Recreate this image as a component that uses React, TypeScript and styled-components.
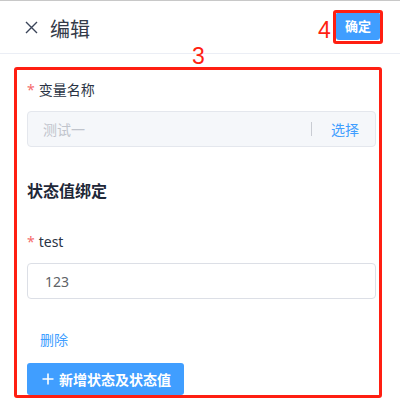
import React from "react";
import styled, { createGlobalStyle } from "styled-components";

const GlobalStyle = createGlobalStyle`
  html, body { margin: 0; padding: 0; background: #fff; }
  body { font-family: "Noto Sans", "Noto Sans CJK SC", sans-serif; }
  * { box-sizing: border-box; }
`;

const Page = styled.div`
  position: relative;
  width: 400px;
  height: 413px;
  border-top: 1px solid #c8c8c8;
  overflow: hidden;
`;

const Header = styled.div`
  height: 53px;
  display: flex;
  align-items: center;
  padding: 0 20px 0 24px;
  border-bottom: 1px solid #ebeef5;
`;

const CloseButton = styled.span`
  display: inline-flex;
  width: 14px;
  height: 14px;
  align-items: center;
  justify-content: center;
  color: #3a4459;
`;

const Title = styled.span`
  margin-left: 12px;
  font-size: 20px;
  line-height: 28px;
  color: #333a48;
  font-family: "Noto Sans CJK SC", sans-serif;
  margin-top: 3px;
`;

const Spacer = styled.div`
  flex: 1;
`;

const ConfirmButton = styled.button`
  width: 44px;
  height: 28px;
  border: none;
  border-radius: 3px;
  background: #409eff;
  color: #fff;
  font-size: 13px;
  font-weight: 600;
  font-family: "Noto Sans CJK SC", sans-serif;
  padding: 0;
  margin-bottom: 3px;
`;

const Body = styled.div`
  display: flex;
  flex-direction: column;
  padding: 25px 24px 0 27px;
`;

const Label = styled.div<{ $gap?: number }>`
  display: flex;
  align-items: center;
  height: 20px;
  font-size: 14px;
  color: #2b3445;
  margin-top: ${(p) => p.$gap ?? 0}px;
  font-family: "Noto Sans", "Noto Sans CJK SC", sans-serif;
`;

const Required = styled.span`
  color: #f56c6c;
  margin-right: 4px;
  font-size: 14px;
`;

const InputBox = styled.div<{ $disabled?: boolean }>`
  margin-top: 12px;
  height: 36px;
  display: flex;
  align-items: center;
  border: 1px solid ${(p) => (p.$disabled ? "#e4e7ed" : "#dcdfe6")};
  background: ${(p) => (p.$disabled ? "#f5f7fa" : "#fff")};
  border-radius: 4px;
  padding: 0 16px 0 15px;
  font-size: 14px;
`;

const InputText = styled.span<{ $muted?: boolean }>`
  flex: 1;
  color: ${(p) => (p.$muted ? "#c0c4cc" : "#606266")};
  font-family: "Noto Sans", "Noto Sans CJK SC", sans-serif;
  padding-left: ${(p) => (p.$muted ? 0 : 2)}px;
`;

const Divider = styled.span`
  width: 1px;
  height: 14px;
  background: #c9ccd3;
  margin-right: 19px;
`;

const LinkText = styled.span`
  color: #409eff;
  font-size: 14px;
  font-family: "Noto Sans CJK SC", sans-serif;
`;

const SectionTitle = styled.div`
  margin-top: 31px;
  height: 24px;
  line-height: 24px;
  font-size: 16px;
  font-weight: 700;
  color: #1f2838;
  font-family: "Noto Sans CJK SC", sans-serif;
`;

const DeleteLink = styled(LinkText)`
  margin-top: 30px;
  margin-left: 13px;
  height: 20px;
  line-height: 20px;
  align-self: flex-start;
`;

const AddButton = styled.button`
  margin-top: 14px;
  align-self: flex-start;
  width: 157px;
  height: 32px;
  border: none;
  border-radius: 3px;
  background: #409eff;
  color: #fff;
  display: flex;
  align-items: center;
  padding: 0 0 0 15px;
  font-size: 14px;
  font-weight: 700;
  font-family: "Noto Sans CJK SC", sans-serif;
  gap: 5px;
`;

const AnnotationBox = styled.div<{ $left: number; $top: number; $w: number; $h: number }>`
  position: absolute;
  left: ${(p) => p.$left}px;
  top: ${(p) => p.$top}px;
  width: ${(p) => p.$w}px;
  height: ${(p) => p.$h}px;
  border: 3px solid #ff1f12;
  border-radius: 3px;
  pointer-events: none;
`;

const AnnotationNumber = styled.span<{ $left: number; $top: number }>`
  position: absolute;
  left: ${(p) => p.$left}px;
  top: ${(p) => p.$top}px;
  color: #ff1f12;
  font-size: 23px;
  line-height: 24px;
  font-family: "Liberation Sans", Arial, sans-serif;
`;

export default function App() {
  return (
    <>
      <GlobalStyle />
      <Page>
        <Header>
          <CloseButton>
            <svg width="13" height="13" viewBox="0 0 13 13">
              <path d="M1 1 L12 12 M12 1 L1 12" stroke="currentColor" strokeWidth="1.4" fill="none" />
            </svg>
          </CloseButton>
          <Title>编辑</Title>
          <Spacer />
          <ConfirmButton>确定</ConfirmButton>
        </Header>
        <Body>
          <Label>
            <Required>*</Required>变量名称
          </Label>
          <InputBox $disabled>
            <InputText $muted>测试一</InputText>
            <Divider />
            <LinkText>选择</LinkText>
          </InputBox>
          <SectionTitle>状态值绑定</SectionTitle>
          <Label $gap={29}>
            <Required>*</Required>test
          </Label>
          <InputBox>
            <InputText>123</InputText>
          </InputBox>
          <DeleteLink>删除</DeleteLink>
          <AddButton>
            <svg width="12" height="12" viewBox="0 0 12 12">
              <path d="M6 0.5 V11.5 M0.5 6 H11.5" stroke="#fff" strokeWidth="1.6" />
            </svg>
            新增状态及状态值
          </AddButton>
        </Body>
        <AnnotationBox $left={14} $top={66} $w={368} $h={331} />
        <AnnotationNumber $left={192} $top={43}>3</AnnotationNumber>
        <AnnotationBox $left={333} $top={9} $w={50} $h={34} />
        <AnnotationNumber $left={318} $top={17}>4</AnnotationNumber>
      </Page>
    </>
  );
}
